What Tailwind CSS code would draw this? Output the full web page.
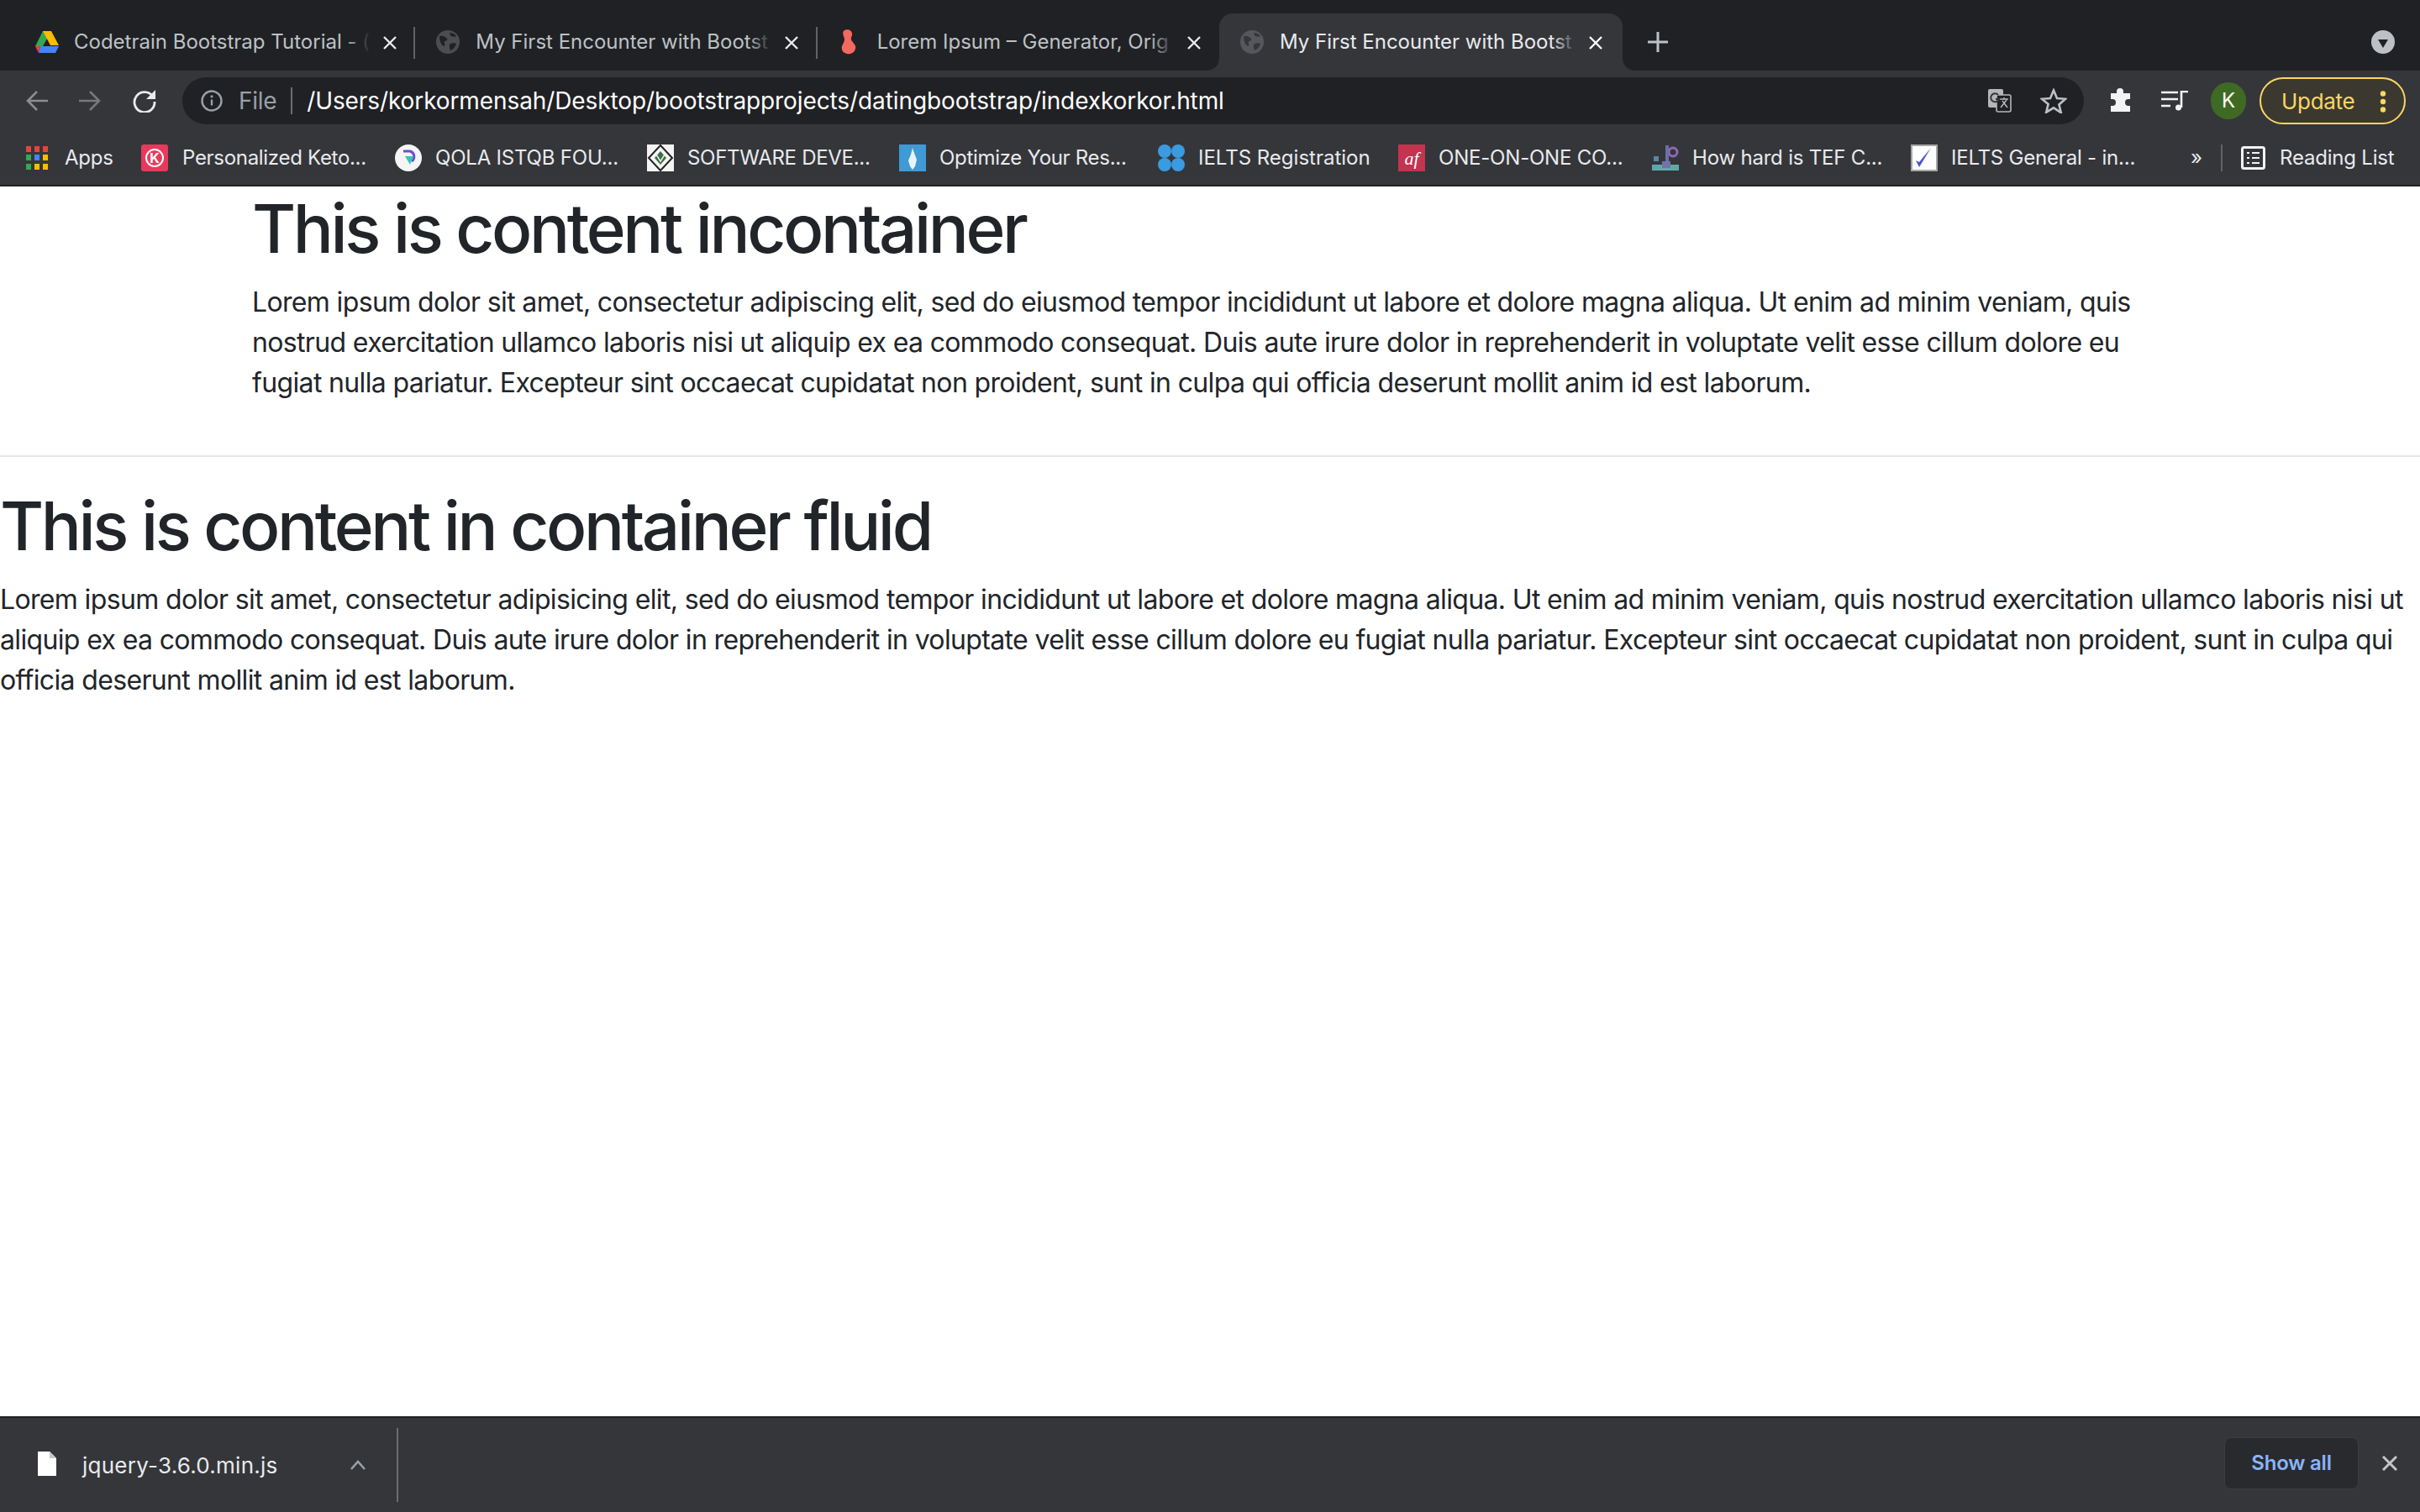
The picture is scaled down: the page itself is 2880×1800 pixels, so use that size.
<!DOCTYPE html>
<html lang="en">
<head>
    <meta charset="UTF-8">
    <title>My First Encounter with Bootstrap</title>
    <script src="https://cdn.jsdelivr.net/npm/@tailwindcss/browser@4"></script>
</head>
<body class="h-screen w-[2880px] overflow-hidden flex flex-col bg-white font-['Inter',sans-serif]">

    <!-- tab strip -->
    <div class="h-[84px] shrink-0 bg-[#202124] flex items-end pl-[16px] relative">
        <div class="w-[478.33px] h-[68px] relative flex items-center pl-[25px] text-[#bdc1c6]">
            <svg class="w-[30px] h-[28px] shrink-0" viewBox="0 0 30 28"><path d="M10 1h10l-5 9-5 9H1z" fill="#34a853"/><path d="M10 1h10l9 17H19z" fill="#fbbc04"/><path d="M7 19h22l-4 8H5z" fill="#4285f4"/><path d="M1 19h6l-2 8z" fill="#ea4335"/></svg>
            <span class="ml-[17px] whitespace-nowrap text-[24px]">Codetrain Bootstrap Tutorial - (</span>
            <span class="absolute left-[395px] top-[14px] w-[30px] h-[40px] bg-linear-to-r from-transparent to-[#202124]"></span>
            <svg class="absolute left-[440px] top-[27px] w-[16px] h-[16px]" viewBox="0 0 16 16"><path d="M1 1l14 14M15 1L1 15" stroke="#e8eaed" stroke-width="2.4"/></svg>
            <span class="absolute right-0 top-[16px] w-[2px] h-[38px] bg-[#5f6368]"></span>
        </div>
        <div class="w-[478.33px] h-[68px] relative flex items-center pl-[25px] text-[#bdc1c6]">
            <svg class="w-[28px] h-[28px] shrink-0" viewBox="0 0 28 28"><circle cx="14" cy="14" r="14" fill="#4b4d51"/><path d="M4 7c4-1 7 1 9 3 1 2-1 3-3 3-1 2 1 4 0 6-3 0-6-5-6-12zM17 16c3-1 6-1 7 0-1 4-4 7-7 8-1-3-2-6 0-8zM16 3c3 0 6 1 8 4-2 1-5 1-7-1z" fill="#202124"/></svg>
            <span class="ml-[19px] whitespace-nowrap text-[24px]">My First Encounter with Bootst</span>
            <span class="absolute left-[395px] top-[14px] w-[30px] h-[40px] bg-linear-to-r from-transparent to-[#202124]"></span>
            <svg class="absolute left-[440px] top-[27px] w-[16px] h-[16px]" viewBox="0 0 16 16"><path d="M1 1l14 14M15 1L1 15" stroke="#e8eaed" stroke-width="2.4"/></svg>
            <span class="absolute right-0 top-[16px] w-[2px] h-[38px] bg-[#5f6368]"></span>
        </div>
        <div class="w-[478.33px] h-[68px] relative flex items-center pl-[25px] text-[#bdc1c6]">
            <svg class="w-[24px] h-[32px] shrink-0" viewBox="0 0 24 32"><path d="M7 2c5-2 10 1 9 6-1 3-2 4 0 7 2 3 5 5 4 9-1 5-6 7-10 6-5-1-7-5-6-9 1-3 3-5 3-8C7 10 3 5 7 2z" fill="#f4695f"/></svg>
            <span class="ml-[22px] whitespace-nowrap text-[24px]">Lorem Ipsum – Generator, Orig</span>
            <span class="absolute left-[395px] top-[14px] w-[30px] h-[40px] bg-linear-to-r from-transparent to-[#202124]"></span>
            <svg class="absolute left-[440px] top-[27px] w-[16px] h-[16px]" viewBox="0 0 16 16"><path d="M1 1l14 14M15 1L1 15" stroke="#e8eaed" stroke-width="2.4"/></svg>
        </div>
        <div class="w-[480px] h-[68px] relative flex items-center pl-[25px] text-[#e8eaed] bg-[#35363a] rounded-t-[16px]">
            <svg class="absolute -left-[16px] bottom-0 w-[16px] h-[16px]" viewBox="0 0 16 16"><path d="M16 0v16H0C10 16 16 10 16 0z" fill="#35363a"/></svg>
            <svg class="absolute -right-[16px] bottom-0 w-[16px] h-[16px]" viewBox="0 0 16 16"><path d="M0 0v16h16C6 16 0 10 0 0z" fill="#35363a"/></svg>
            <svg class="w-[28px] h-[28px] shrink-0" viewBox="0 0 28 28"><circle cx="14" cy="14" r="14" fill="#55575c"/><path d="M4 7c4-1 7 1 9 3 1 2-1 3-3 3-1 2 1 4 0 6-3 0-6-5-6-12zM17 16c3-1 6-1 7 0-1 4-4 7-7 8-1-3-2-6 0-8zM16 3c3 0 6 1 8 4-2 1-5 1-7-1z" fill="#35363a"/></svg>
            <span class="ml-[19px] whitespace-nowrap text-[24px]">My First Encounter with Bootst</span>
            <span class="absolute left-[395px] top-[14px] w-[30px] h-[40px] bg-linear-to-r from-transparent to-[#35363a]"></span>
            <svg class="absolute left-[440px] top-[27px] w-[16px] h-[16px]" viewBox="0 0 16 16"><path d="M1 1l14 14M15 1L1 15" stroke="#ffffff" stroke-width="2.4"/></svg>
        </div>
        <svg class="ml-[30px] mb-[22px] w-[24px] h-[24px]" viewBox="0 0 24 24"><path d="M12 0v24M0 12h24" stroke="#bdc1c6" stroke-width="3"/></svg>
        <svg class="absolute left-[2822px] top-[36px] w-[28px] h-[28px]" viewBox="0 0 28 28"><circle cx="14" cy="14" r="14" fill="#bdc1c6"/><path d="M8 11h12l-6 10z" fill="#202124"/></svg>
    </div>

    <!-- toolbar -->
    <div class="h-[64px] shrink-0 bg-[#35363a] flex pt-[8px]">
        <div class="w-[217px] flex items-center pl-[31px]">
            <svg class="w-[26px] h-[26px]" viewBox="0 0 26 26" fill="none" stroke="#8b8d91" stroke-width="2.6"><path d="M26 13H3M13 2L2 13l11 11"/></svg>
            <svg class="ml-[37px] w-[26px] h-[26px]" viewBox="0 0 26 26" fill="none" stroke="#76787c" stroke-width="2.6"><path d="M0 13h23M13 2l11 11-11 11"/></svg>
            <svg class="ml-[38px] w-[28px] h-[28px]" viewBox="0 0 28 28" fill="none"><path d="M24 9A12 12 0 1 0 26 15" stroke="#e8eaed" stroke-width="2.8"/><path d="M27 1v11H16z" fill="#e8eaed"/></svg>
        </div>
        <div class="w-[2263px] h-[56px] rounded-full bg-[#202124] flex items-center pl-[22px] relative">
            <svg class="w-[26px] h-[26px] shrink-0" viewBox="0 0 26 26" fill="none"><circle cx="13" cy="13" r="11.5" stroke="#9aa0a6" stroke-width="2.4"/><path d="M13 11.5v7" stroke="#9aa0a6" stroke-width="2.4"/><circle cx="13" cy="7.8" r="1.6" fill="#9aa0a6"/></svg>
            <span class="ml-[19px] text-[28px] tracking-[-0.3px] text-[#9aa0a6]">File</span>
            <span class="ml-[17px] w-[2px] h-[32px] bg-[#6b6d71]"></span>
            <span class="ml-[17px] text-[28px] tracking-[-0.1px] text-white whitespace-nowrap">/Users/korkormensah/Desktop/bootstrapprojects/datingbootstrap/indexkorkor.html</span>
            <svg class="absolute left-[2149px] top-[14px] w-[28px] h-[28px]" viewBox="0 0 28 28"><rect x="0" y="0" width="18" height="22" rx="2" fill="#b4b6b9"/><rect x="10" y="7" width="17" height="20" rx="2" fill="#202124" stroke="#b4b6b9" stroke-width="1.6"/><path d="M14 12h10M19 10v2M15 22l7-9M17 14l6 8" stroke="#b4b6b9" stroke-width="1.5" fill="none"/><path d="M12 7a5 5 0 1 0 1 5H9" stroke="#35363a" stroke-width="2" fill="none"/></svg>
            <svg class="absolute left-[2211px] top-[13px] w-[32px] h-[30px]" viewBox="0 0 32 30" fill="none"><path d="M16 2.5l4 9.5 10 .8-7.6 6.6 2.4 9.8L16 23.4l-8.800 5.300 2.400-9.800L2 12.800 12 12z" stroke="#bdc1c6" stroke-width="2.600"/></svg>
        </div>
        <div class="flex-1 relative">
            <svg class="absolute left-[29px] top-[13px] w-[30px] h-[28px]" viewBox="0 0 30 28"><path d="M3 6h7V4a4 4 0 0 1 8 0v2h8v7h-2a4 4 0 0 0 0 8h2v7H3v-7h2a4 4 0 0 0 0-8H3z" fill="#f1f3f4"/></svg>
            <svg class="absolute left-[92px] top-[16px] w-[32px] h-[24px]" viewBox="0 0 32 24" fill="none" stroke="#f1f3f4" stroke-width="2.600"><path d="M0 2h20M0 10h20M0 18h11"/><path d="M24 20V1h8" /><circle cx="20.500" cy="20" r="3.500" fill="#f1f3f4" stroke="none"/></svg>
            <div class="absolute left-[151px] top-[6px] w-[42px] h-[44px] rounded-full bg-[#3f6a24] flex items-center justify-center text-white text-[24px]">K</div>
            <div class="absolute left-[209px] top-0 w-[174px] h-[56px] rounded-full border-2 border-[#fdd663] bg-[#3b392f] flex items-center pl-[24px] text-[#fdd663] text-[26px] tracking-[-0.3px]">
                Update
                <svg class="absolute left-[140px] top-[14px] w-[10px] h-[26px]" viewBox="0 0 10 26" fill="#fdd663"><circle cx="5" cy="3.500" r="3.200"/><circle cx="5" cy="13" r="3.200"/><circle cx="5" cy="22.500" r="3.200"/></svg>
            </div>
        </div>
    </div>

    <!-- bookmarks bar -->
    <div class="h-[74px] shrink-0 bg-[#35363a] border-b-2 border-[#202124] flex items-center pl-[31px] pt-[8px] text-[24px] tracking-[-0.2px] text-[#e8eaed] whitespace-nowrap relative">
        <svg class="w-[26px] h-[28px]" viewBox="0 0 26 28">
            <rect width="6" height="7" fill="#ea4335"/><rect x="10" width="6" height="7" fill="#ea4335"/><rect x="20" width="6" height="7" fill="#ea4335"/>
            <rect y="10" width="6" height="7" fill="#34a853"/><rect x="10" y="10" width="6" height="7" fill="#4285f4"/><rect x="20" y="10" width="6" height="7" fill="#fbbc04"/>
            <rect y="21" width="6" height="7" fill="#34a853"/><rect x="10" y="21" width="6" height="7" fill="#fbbc04"/><rect x="20" y="21" width="6" height="7" fill="#fbbc04"/>
        </svg>
        <span class="ml-[20px] w-[57px]">Apps</span>

        <span class="ml-[34px] w-[32px] h-[32px] bg-[#e8395c] rounded-[3px] flex items-center justify-center text-white text-[16px] font-bold"><span class="w-[22px] h-[22px] rounded-full border-2 border-white flex items-center justify-center tracking-normal">K</span></span>
        <span class="ml-[17px] w-[221px] tracking-[-0.3px]">Personalized Keto...</span>

        <svg class="ml-[32px] w-[32px] h-[32px]" viewBox="0 0 32 32"><circle cx="16" cy="16" r="16" fill="#f5f5f5"/><path d="M10 8h8c6 2 6 9 2 12" fill="none" stroke="#6a4fd8" stroke-width="3"/><path d="M12 14h10l-4 10z" fill="#35c9b0"/></svg>
        <span class="ml-[16px] w-[219px]">QOLA ISTQB FOU...</span>

        <svg class="ml-[33px] w-[32px] h-[32px]" viewBox="0 0 32 32"><rect width="32" height="32" fill="#f4f4f4"/><path d="M16 1l14 15-14 15L2 16z" fill="none" stroke="#222" stroke-width="2"/><path d="M16 8l7 8-7 8-7-8z" fill="#3f6d45"/><path d="M11 12l5 8 5-8" fill="none" stroke="#e8f0e8" stroke-width="1.500"/></svg>
        <span class="ml-[16px] w-[218px] tracking-[-0.3px]">SOFTWARE DEVE...</span>

        <svg class="ml-[34px] w-[32px] h-[32px]" viewBox="0 0 32 32"><rect width="32" height="32" fill="#3f9ad6"/><path d="M16 4l2 6 3 8-2 8-3 4-3-4-2-7 3-7z" fill="#e8f4fb"/></svg>
        <span class="ml-[16px] w-[225px] tracking-[-0.3px]">Optimize Your Res...</span>

        <svg class="ml-[35px] w-[32px] h-[32px]" viewBox="0 0 32 32" fill="#3a9be0"><circle cx="8" cy="8" r="8"/><circle cx="24" cy="8" r="8"/><circle cx="8" cy="24" r="8"/><circle cx="24" cy="24" r="8"/></svg>
        <span class="ml-[16px] w-[204px] tracking-normal">IELTS Registration</span>

        <span class="ml-[34px] w-[32px] h-[32px] bg-[#c4334f] flex items-center justify-center text-white text-[22px] italic font-['Liberation_Serif',serif] tracking-normal">af</span>
        <span class="ml-[16px] w-[220px]">ONE-ON-ONE CO...</span>

        <svg class="ml-[34px] w-[32px] h-[32px]" viewBox="0 0 32 32"><circle cx="25" cy="9" r="5" fill="none" stroke="#8f6bb0" stroke-width="3"/><rect x="16" y="1" width="4" height="22" fill="#6b6fa8"/><rect x="2" y="14" width="6" height="6" fill="#5b86a8"/><rect x="0" y="24" width="32" height="7" fill="#5fa8a8"/><rect x="12" y="20" width="10" height="8" fill="#7273a8"/></svg>
        <span class="ml-[16px] w-[226px]">How hard is TEF C...</span>

        <svg class="ml-[34px] w-[32px] h-[32px]" viewBox="0 0 32 32"><rect width="32" height="32" fill="#fff"/><rect x="1" y="1" width="30" height="30" fill="none" stroke="#a6a6a6" stroke-width="2"/><path d="M6 19l4 8L24 4 10 21z" fill="#4a55c8"/></svg>
        <span class="ml-[16px] w-[220px]">IELTS General - in...</span>

        <span class="ml-[65px] w-[13px] text-[24px] tracking-normal">»</span>
        <span class="ml-[23px] w-[2px] h-[32px] bg-[#5f6368]"></span>
        <svg class="ml-[22px] w-[29px] h-[28px]" viewBox="0 0 29 28" fill="none" stroke="#f1f3f4" stroke-width="3"><rect x="1.500" y="1.500" width="26" height="25" rx="2"/><path d="M7 8h3M13 8h9M7 14h3M13 14h9M7 20h3M13 20h9" stroke-width="2"/></svg>
        <span class="ml-[17px]">Reading List</span>
    </div>

    <!-- page -->
    <main class="flex-1 pt-[2px] text-[#212529] text-[32px] leading-[48px]">
        <div class="w-[2280px] mx-auto pb-[30px]">
            <h1 class="text-[80px] leading-[96px] font-medium tracking-[-3.4px] mb-[16px]">This is content incontainer</h1>
            <p class="tracking-[-0.645px]">Lorem ipsum dolor sit amet, consectetur adipiscing elit, sed do eiusmod tempor incididunt ut labore et dolore magna aliqua. Ut enim ad minim veniam, quis nostrud exercitation ullamco laboris nisi ut aliquip ex ea commodo consequat. Duis aute irure dolor in reprehenderit in voluptate velit esse cillum dolore eu fugiat nulla pariatur. Excepteur sint occaecat cupidatat non proident, sunt in culpa qui officia deserunt mollit anim id est laborum.</p>
        </div>
        <hr class="mt-[32px] mb-[34px] border-t-2 border-black/10">
        <div>
            <h1 class="text-[80px] leading-[96px] font-medium tracking-[-3.4px] mb-[16px]">This is content in container fluid</h1>
            <p class="tracking-[-0.645px]">Lorem ipsum dolor sit amet, consectetur adipisicing elit, sed do eiusmod tempor incididunt ut labore et dolore magna aliqua. Ut enim ad minim veniam, quis nostrud exercitation ullamco laboris nisi ut aliquip ex ea commodo consequat. Duis aute irure dolor in reprehenderit in voluptate velit esse cillum dolore eu fugiat nulla pariatur. Excepteur sint occaecat cupidatat non proident, sunt in culpa qui officia deserunt mollit anim id est laborum.</p>
        </div>
    </main>

    <!-- downloads bar -->
    <div class="h-[114px] shrink-0 bg-[#35363a] border-t-2 border-[#202124] flex items-center relative text-[#e8eaed]">
        <svg class="ml-[45px] -mt-[4px] w-[22px] h-[29px]" viewBox="0 0 22 29"><path d="M0 0h14l8 8v21H0z" fill="#fff"/><path d="M14 0l8 8h-8z" fill="#c8c8c8"/></svg>
        <span class="ml-[31px] w-[320px] text-[26px] tracking-[0.25px]">jquery-3.6.0.min.js</span>
        <svg class="absolute left-[417px] top-[50px] w-[18px] h-[12px]" viewBox="0 0 18 12" fill="none"><path d="M1 11l8-9 8 9" stroke="#9aa0a6" stroke-width="2.600"/></svg>
        <span class="absolute left-[472px] top-[12px] w-[2px] h-[88px] bg-[#6b6d71]"></span>
        <div class="ml-auto mr-[73px] w-[160px] h-[62px] -mt-[4px] rounded-[8px] bg-[#292a2d] border border-[#3c3d41] flex items-center justify-center text-[#8ab4f8] text-[24px] font-semibold tracking-[-0.2px]">Show all</div>
        <svg class="absolute left-[2835px] top-[45px] w-[18px] h-[18px]" viewBox="0 0 18 18"><path d="M1 1l16 16M17 1L1 17" stroke="#c4c5c7" stroke-width="3"/></svg>
    </div>
</body>
</html>
